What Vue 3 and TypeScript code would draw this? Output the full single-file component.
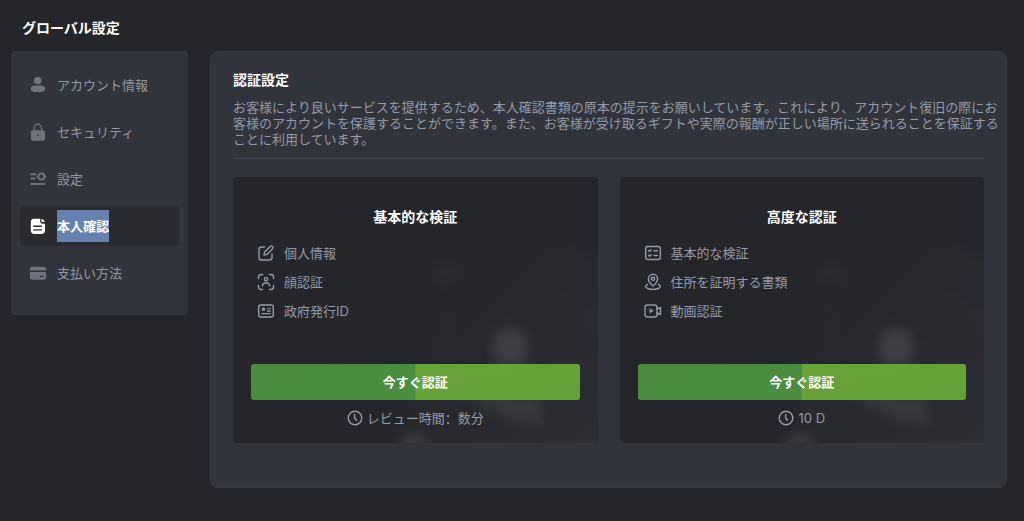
<script setup lang="ts">
import { ref } from 'vue'

type NavIcon = 'user' | 'lock' | 'settings' | 'document' | 'card'
type StepIcon = 'edit' | 'face' | 'id' | 'checklist' | 'location' | 'video'

interface NavItem {
  icon: NavIcon
  label: string
}

interface Level {
  id: string
  title: string
  steps: { icon: StepIcon; label: string }[]
  time: string
}

const navItems: NavItem[] = [
  { icon: 'user', label: 'アカウント情報' },
  { icon: 'lock', label: 'セキュリティ' },
  { icon: 'settings', label: '設定' },
  { icon: 'document', label: '本人確認' },
  { icon: 'card', label: '支払い方法' },
]

const active = ref<NavIcon>('document')

const levels: Level[] = [
  {
    id: 'basic',
    title: '基本的な検証',
    steps: [
      { icon: 'edit', label: '個人情報' },
      { icon: 'face', label: '顔認証' },
      { icon: 'id', label: '政府発行ID' },
    ],
    time: 'レビュー時間：数分',
  },
  {
    id: 'advanced',
    title: '高度な認証',
    steps: [
      { icon: 'checklist', label: '基本的な検証' },
      { icon: 'location', label: '住所を証明する書類' },
      { icon: 'video', label: '動画認証' },
    ],
    time: '10 D',
  },
]
</script>

<template>
  <div class="page">
    <h1 class="page-title">グローバル設定</h1>
    <div class="layout">
      <nav class="sidebar" aria-label="グローバル設定">
        <a
          v-for="item in navItems"
          :key="item.icon"
          href="#"
          class="nav-item"
          :class="{ active: item.icon === active }"
          :aria-current="item.icon === active ? 'page' : undefined"
          @click.prevent="active = item.icon"
        >
          <svg class="icon" viewBox="0 0 18 18" aria-hidden="true">
            <g v-if="item.icon === 'user'" fill="currentColor">
              <circle cx="8.8" cy="4.6" r="3.8" />
              <path d="M6 9.5h6c2.500 0 4.300 1.400 4.300 3.300s-1.800 3.300-4.300 3.300H6c-2.500 0-4.300-1.400-4.300-3.300S3.500 9.500 6 9.500Z" />
            </g>
            <g v-else-if="item.icon === 'lock'">
              <path d="M5.200 8V5a3.700 3.700 0 0 1 7.400 0v3" fill="none" stroke="currentColor" stroke-width="1.400" />
              <rect x="1.800" y="7.300" width="14.200" height="10.500" rx="2" fill="currentColor" />
              <path d="M8.900 12v.6" class="cut" />
            </g>
            <g v-else-if="item.icon === 'settings'" fill="none" stroke="currentColor" stroke-width="1.900" stroke-linecap="round">
              <path d="M2 4.300h4.500M2 8.500h3.500M2 14h13.500M8.300 6.500h.6M15.900 6.500h.4" />
              <circle cx="12.400" cy="6.500" r="3" />
            </g>
            <g v-else-if="item.icon === 'document'">
              <path d="M5 1.700h6.200v2.500c0 1.600.9 2.500 2.500 2.500H16v6.500c0 2.500-1.300 3.700-3.700 3.700H5.500C3 16.900 1.800 15.600 1.800 13.200V5c0-2.100 1.100-3.300 3.200-3.300Z" fill="currentColor" />
              <path d="M12.400 1.900c1.800.2 3 1.400 3.200 3.200h-1.700c-1 0-1.500-.5-1.500-1.500Z" fill="currentColor" />
              <path d="M4.800 9.200h7.600M4.800 12.900h7.600" class="cut" />
            </g>
            <g v-else>
              <path d="M3 2.800h12a2 2 0 0 1 2 2v1.600H1V4.800a2 2 0 0 1 2-2ZM1 8h16v5.800a2 2 0 0 1-2 2H3a2 2 0 0 1-2-2Z" fill="currentColor" />
              <path d="M11.500 12.500h2.500" class="cut" />
            </g>
          </svg>
          <span class="nav-label">{{ item.label }}</span>
        </a>
      </nav>

      <main class="panel">
        <h2 class="panel-title">認証設定</h2>
        <p class="description">
          お客様により良いサービスを提供するため、本人確認書類の原本の提示をお願いしています。これにより、アカウント復旧の際にお<br />客様のアカウントを保護することができます。また、お客様が受け取るギフトや実際の報酬が正しい場所に送られることを保証する<br />ことに利用しています。
        </p>
        <div class="levels">
          <section v-for="level in levels" :key="level.id" class="card">
            <svg class="backdrop" viewBox="0 0 220 266" aria-hidden="true">
              <defs>
                <filter :id="`soft-${level.id}`" x="-30%" y="-30%" width="160%" height="160%">
                  <feGaussianBlur stdDeviation="6" />
                </filter>
                <linearGradient :id="`fade-${level.id}`" x1="0" y1="0" x2="1" y2="1">
                  <stop offset="0.2" stop-color="#fff" stop-opacity="0" />
                  <stop offset="1" stop-color="#fff" stop-opacity="0.05" />
                </linearGradient>
              </defs>
              <g :filter="`url(#soft-${level.id})`" fill="#fff">
                <circle cx="150" cy="186" r="124" :fill="`url(#fade-${level.id})`" />
                <circle cx="67" cy="97" r="9" fill-opacity="0.04" />
                <ellipse cx="132" cy="170" rx="18" ry="20" fill-opacity="0.1" />
                <path d="M72 210l88 8 4 28-28-3Z" fill-opacity="0.07" />
                <circle cx="36" cy="268" r="14" fill-opacity="0.09" />
                <path d="M160 112q42 18 62 50v-20q-22-24-62-30Z" fill-opacity="0.015" />
                <path d="M74 120q-16 52-4 128" fill="none" stroke="#fff" stroke-width="7" stroke-opacity="0.01" />
              </g>
            </svg>
            <h3 class="card-title">{{ level.title }}</h3>
            <ul class="steps">
              <li v-for="step in level.steps" :key="step.icon" class="step">
                <svg class="icon line" viewBox="0 0 18 18" aria-hidden="true">
                  <g v-if="step.icon === 'edit'">
                    <path d="M7.500 3H4.500A2.500 2.500 0 0 0 2 5.500v8A2.500 2.500 0 0 0 4.500 16h8a2.500 2.500 0 0 0 2.500-2.500V10" />
                    <path d="m7 11 .6-3 5.600-5.600a1.700 1.700 0 0 1 2.400 2.400L10 10.400Z" />
                  </g>
                  <g v-else-if="step.icon === 'face'">
                    <path d="M1.500 5.500V4a2.500 2.500 0 0 1 2.500-2.500h1.500M12.500 1.500H14A2.500 2.500 0 0 1 16.500 4v1.500M16.500 12.500V14a2.500 2.500 0 0 1-2.500 2.500h-1.500M5.500 16.500H4A2.500 2.500 0 0 1 1.500 14v-1.500" />
                    <circle cx="9" cy="6.200" r="1.600" />
                    <path d="M5.300 12.800c.4-1.900 1.800-3 3.700-3s3.300 1.100 3.700 3" />
                  </g>
                  <g v-else-if="step.icon === 'id'">
                    <rect x="1.700" y="3" width="14.600" height="12" rx="2" />
                    <circle cx="6.500" cy="7.200" r="1.100" />
                    <path d="M4.800 11.600h8.400M10.500 6.500h.5M12.800 6.500h.4M10.500 9h2.700" />
                  </g>
                  <g v-else-if="step.icon === 'checklist'">
                    <rect x="1.700" y="2.500" width="14.600" height="13" rx="2" />
                    <path d="m4.500 6.500 1 1L7.300 5.700M4.500 11.300l1 1 1.800-1.800M10 6.700h3.500M10 11.500h3.500" />
                  </g>
                  <g v-else-if="step.icon === 'location'">
                    <path d="M9 13C6.300 10.500 4.400 8.400 4.400 5.900a4.600 4.600 0 0 1 9.200 0c0 2.500-1.900 4.600-4.600 7.100Z" />
                    <circle cx="9" cy="5.800" r="1.600" />
                    <path d="M3.500 11.500C.9 12.500 1 14.600 3.700 15.500a17 17 0 0 0 10.600 0c2.700-.9 2.800-3 .2-4" />
                  </g>
                  <g v-else>
                    <rect x="1" y="3" width="12" height="12" rx="2.500" />
                    <path d="m13 7 3.500-1.500v7L13 11" />
                    <path d="M5.800 6.900v4.200L9.200 9Z" fill="currentColor" stroke-width="0.500" />
                  </g>
                </svg>
                <span>{{ step.label }}</span>
              </li>
            </ul>
            <button type="button" class="verify">今すぐ認証</button>
            <p class="time">
              <svg class="clock" viewBox="0 0 16 16" aria-hidden="true">
                <circle cx="8" cy="8" r="6.800" />
                <path d="M7.600 4.500v3.800l2 2" />
              </svg>
              <span>{{ level.time }}</span>
            </p>
          </section>
        </div>
      </main>
    </div>
  </div>
</template>

<style>
body {
  margin: 0;
  background: #25262b;
}
</style>

<style scoped>
.page {
  box-sizing: border-box;
  min-height: 100vh;
  padding: 17px 17px 33px 11px;
  background: #25262b;
  color: #949aa8;
  font-family: Inter, "Noto Sans CJK JP", sans-serif;
  font-size: 13px;
  line-height: 16px;
}

.page-title,
.panel-title,
.card-title {
  margin: 0;
  color: #fff;
  font-size: 14px;
  line-height: 22px;
  font-weight: 700;
}

.page-title {
  padding-left: 11px;
}

.layout {
  display: flex;
  align-items: flex-start;
  gap: 22px;
  margin-top: 12px;
}

.sidebar {
  display: flex;
  flex: 0 0 177px;
  box-sizing: border-box;
  flex-direction: column;
  gap: 7px;
  padding: 14px 9px 22px;
  border-radius: 4px;
  background: #32343c;
}

.nav-item {
  --item-bg: #32343c;
  display: flex;
  align-items: center;
  gap: 10px;
  height: 40px;
  padding-left: 9px;
  border-radius: 4px;
  background: var(--item-bg);
  color: #9297a3;
  text-decoration: none;
}

.nav-item .icon {
  color: #6f737d;
}

.nav-label {
  line-height: 32px;
}

.nav-item.active {
  --item-bg: #2a2b30;
  color: #fff;
  font-weight: 700;
}

.nav-item.active .icon {
  color: #fff;
}

.nav-item.active .nav-label {
  background: #6482ad;
}

.icon {
  flex: none;
  width: 18px;
  height: 18px;
}

.cut {
  fill: none;
  stroke: var(--item-bg);
  stroke-width: 1.4;
  stroke-linecap: round;
}

.line,
.clock {
  fill: none;
  stroke: currentColor;
  stroke-width: 1.4;
  stroke-linecap: round;
  stroke-linejoin: round;
}

.panel {
  flex: 1;
  min-width: 0;
  padding: 17px 22px 44px;
  border: 1px solid #383a42;
  border-radius: 8px;
  background: #32343c;
}

.description {
  margin: 8px -20px 0 0;
}

.levels {
  display: grid;
  grid-template-columns: 1fr 1fr;
  gap: 22px;
  margin-top: 11px;
  padding-top: 18px;
  border-top: 1px solid #434650;
}

.card {
  position: relative;
  display: flex;
  flex-direction: column;
  padding: 29px 18px 17px;
  overflow: hidden;
  border-radius: 4px;
  background: #25262b;
}

.card > * {
  position: relative;
}

.card > .backdrop {
  position: absolute;
  right: 0;
  bottom: 0;
  width: 220px;
  height: 266px;
}

.card-title {
  text-align: center;
}

.steps {
  display: flex;
  flex-direction: column;
  gap: 11px;
  margin: 16px 0 0;
  padding: 0 0 0 6px;
  list-style: none;
}

.step {
  display: flex;
  align-items: center;
  gap: 9px;
  height: 18px;
}

.verify {
  height: 36px;
  margin-top: 44px;
  padding: 0;
  border: 0;
  border-radius: 3px;
  background:
    linear-gradient(170deg, #4b8b40, #4a8e41) left / 50% 100% no-repeat,
    linear-gradient(170deg, #6ca638, #63a03a);
  color: #fff;
  font: inherit;
  font-weight: 700;
  cursor: pointer;
}

.time {
  display: flex;
  align-items: center;
  justify-content: center;
  gap: 4px;
  margin: 10px 0 0;
  font-family: Inter, "Noto Sans CJK SC", sans-serif;
}

.clock {
  width: 16px;
  height: 16px;
}
</style>
